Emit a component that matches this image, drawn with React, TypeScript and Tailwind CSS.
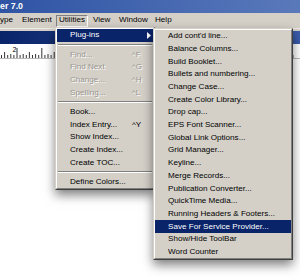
type Item = { label?: string; key?: string; disabled?: boolean; active?: boolean; sub?: boolean; sep?: boolean }

const UTIL_ITEMS: Item[] = [
  { label: 'Plug-ins', active: true, sub: true },
  { sep: true },
  { label: 'Find...', key: '^F', disabled: true },
  { label: 'Find Next', key: '^G', disabled: true },
  { label: 'Change...', key: '^H', disabled: true },
  { label: 'Spelling...', key: '^L', disabled: true },
  { sep: true },
  { label: 'Book...' },
  { label: 'Index Entry...', key: '^Y' },
  { label: 'Show Index...' },
  { label: 'Create Index...' },
  { label: 'Create TOC...' },
  { sep: true },
  { label: 'Define Colors...' },
]

const PLUGINS = [
  "Add cont'd line...",
  'Balance Columns...',
  'Build Booklet...',
  'Bullets and numbering...',
  'Change Case...',
  'Create Color Library...',
  'Drop cap...',
  'EPS Font Scanner...',
  'Global Link Options...',
  'Grid Manager...',
  'Keyline...',
  'Merge Records...',
  'Publication Converter...',
  'QuickTime Media...',
  'Running Headers & Footers...',
  'Save For Service Provider...',
  'Show/Hide ToolBar',
  'Word Counter',
]

/* ─── ruler ticks ─── */
function Ruler() {
  const ticks = Array.from({ length: 95 }, (_, i) => i)
  return (
    <svg width="300" height="14" className="block">
      {ticks.map(i => {
        const x = 1.5 + i * 3.1
        const h = i % 8 === 5 ? 10 : i % 4 === 1 ? 6 : i % 2 === 1 ? 4 : 3
        return <line key={i} x1={x} x2={x} y1={14 - h} y2={14} stroke="#000" strokeWidth="0.8" />
      })}
      <text x="12.5" y="8" fontSize="7" fontFamily="Liberation Sans, Arial, sans-serif" fill="#000">2</text>
    </svg>
  )
}

function Separator() {
  return (
    <div className="h-[6.6px] flex items-center px-[1px]">
      <div className="w-full border-t border-t-[#808080] border-b border-b-white" />
    </div>
  )
}

function MenuBox({ children, className }: { children: React.ReactNode; className: string }) {
  return (
    <div className={`absolute border border-t-[#d4d0c8] border-l-[#d4d0c8] border-r-[#404040] border-b-[#404040] bg-[#d4d0c8] shadow-[0_5px_10px_rgba(0,0,0,0.5)] ${className}`}>
      <div className="border border-t-white border-l-white border-r-[#808080] border-b-[#808080]">
        {children}
      </div>
    </div>
  )
}

export default function App() {
  return (
    <div
      className="relative w-[300px] h-[277px] overflow-hidden bg-white text-[8.1px] text-black"
      style={{ fontFamily: '"Liberation Sans", Arial, sans-serif' }}
    >
      {/* Title bar */}
      <div className="h-[13px] flex items-center bg-gradient-to-r from-[#2f54a4] to-[#5a79bb]">
        <span className="text-white font-bold text-[8.8px] leading-none">er 7.0</span>
      </div>

      {/* Menu bar */}
      <div className="h-[15px] flex items-center bg-[#d4d0c8]">
        <span className="w-[22px]">ype</span>
        <span className="w-[34px]">Element</span>
        <span className="w-[32px] h-[12px] flex items-center justify-center border border-t-[#808080] border-l-[#808080] border-r-white border-b-white">
          Utilities
        </span>
        <span className="w-[28px] pl-[5px]">View</span>
        <span className="w-[36px] pl-[3px]">Window</span>
        <span className="pl-[3px]">Help</span>
      </div>

      {/* Document window */}
      <div className="h-[3px] bg-[#d4d0c8] border-t border-t-[#ecebe6]" />
      <div className="h-[13px] bg-gradient-to-r from-[#0a246a] to-[#3a5cab]" />
      <Ruler />
      <div className="h-px bg-[#b8b8b8]" />

      {/* Utilities menu */}
      <MenuBox className="left-[55px] top-[27px] w-[100px] z-10">
        {UTIL_ITEMS.map((it, i) =>
          it.sep ? (
            <Separator key={i} />
          ) : (
            <div
              key={i}
              className={`h-[12.7px] flex items-center ${it.active ? 'bg-[#0a246a] text-white' : ''} ${
                it.disabled ? 'text-[#97948d] [text-shadow:1px_1px_0_#fff]' : ''
              }`}
            >
              <span className="flex-1 pl-[13px] whitespace-nowrap">{it.label}</span>
              {it.sub ? (
                <svg width="4" height="7" className="mr-[2px]">
                  <path d="M0 0 L4 3.5 L0 7 Z" fill="#fff" />
                </svg>
              ) : (
                <span className="w-[21px]">{it.key}</span>
              )}
            </div>
          )
        )}
      </MenuBox>

      {/* Plug-ins submenu */}
      <MenuBox className="left-[153px] top-[28px] w-[140px] z-20">
        {PLUGINS.map(name => (
          <div
            key={name}
            className={`h-[12.7px] flex items-center pl-[13px] whitespace-nowrap ${
              name === 'Save For Service Provider...' ? 'bg-[#0a246a] text-white' : ''
            }`}
          >
            {name}
          </div>
        ))}
      </MenuBox>
    </div>
  )
}
